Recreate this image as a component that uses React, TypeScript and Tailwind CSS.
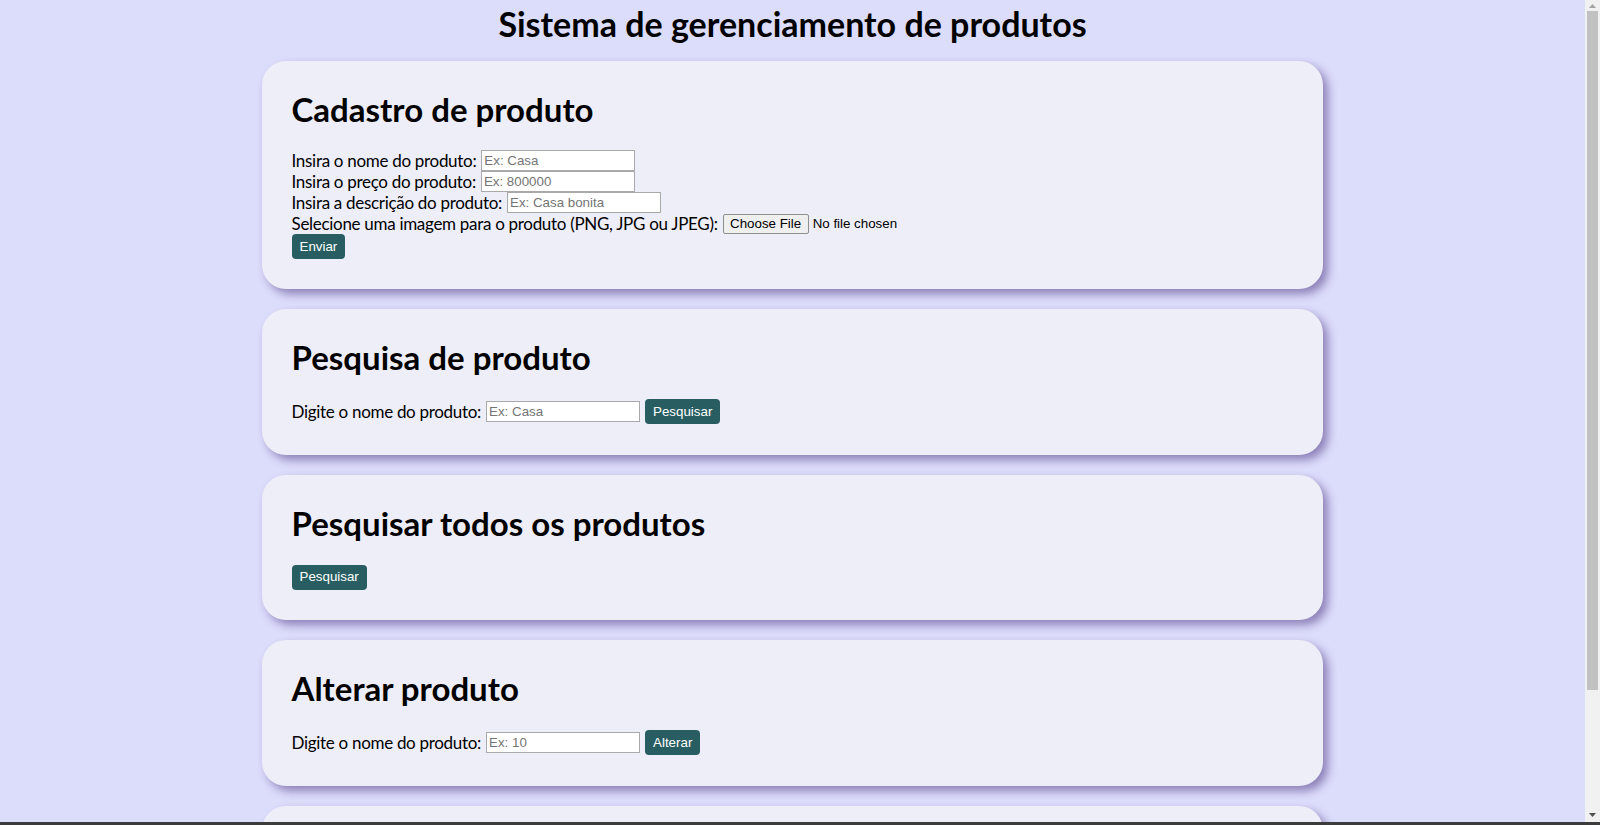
import React from "react";

const inputCls =
  "w-[154px] h-[21px] border border-[#a9a9a9] bg-white px-[2px] text-[13.33px] font-['Liberation_Sans',Arial,sans-serif] text-black placeholder:text-[#757575] outline-none";
const btnCls =
  "h-[25px] px-[8px] rounded-[4px] bg-[#285e62] text-white text-[13.33px] font-['Liberation_Sans',Arial,sans-serif] leading-none";

const cardCls =
  "rounded-[24px] bg-[#eeeef8] px-[30px] py-[30px] shadow-[5px_5px_10px_#8d80b8]";

function Card({ title, children }: { title: string; children: React.ReactNode }) {
  return (
    <section className={cardCls}>
      <h2 className="text-[33px] leading-[37px] font-bold text-black mb-[22px]">{title}</h2>
      {children}
    </section>
  );
}

function Label({ children }: { children: React.ReactNode }) {
  return (
    <span className="text-[17px] tracking-[-0.3px] leading-[21px] text-black whitespace-nowrap">
      {children}
    </span>
  );
}

export default function App() {
  return (
    <div className="min-h-screen bg-[#dcdcfb] font-['Lato','Open_Sans',sans-serif] text-black">
      <div className="w-[calc(100%-15px)]">
        <h1 className="text-center text-[34px] leading-[37px] font-bold pt-[5px] mb-[19px]">
          Sistema de gerenciamento de produtos
        </h1>
        <div className="mx-auto w-[67%] flex flex-col gap-5 pb-[12px]">
          <Card title="Cadastro de produto">
            <div className="flex flex-col">
              <div className="flex items-center h-[21px] gap-[5px]">
                <Label>Insira o nome do produto:</Label>
                <input className={inputCls} placeholder="Ex: Casa" />
              </div>
              <div className="flex items-center h-[21px] gap-[5px]">
                <Label>Insira o preço do produto:</Label>
                <input className={inputCls} placeholder="Ex: 800000" />
              </div>
              <div className="flex items-center h-[21px] gap-[5px]">
                <Label>Insira a descrição do produto:</Label>
                <input className={inputCls} placeholder="Ex: Casa bonita" />
              </div>
              <div className="flex items-center h-[21px] gap-[5px]">
                <Label>Selecione uma imagem para o produto (PNG, JPG ou JPEG):</Label>
                <div className="flex items-center gap-[4px] font-['Liberation_Sans',Arial,sans-serif] text-[13.33px]">
                  <button className="h-[20px] w-[86px] border border-[#8f8f8f] rounded-[2px] bg-[#efefef] text-black leading-none">
                    Choose File
                  </button>
                  <span className="text-black">No file chosen</span>
                </div>
              </div>
              <div className="flex">
                <button className={btnCls}>Enviar</button>
              </div>
            </div>
          </Card>

          <Card title="Pesquisa de produto">
            <div className="flex items-center h-[27px] gap-[5px]">
              <Label>Digite o nome do produto:</Label>
              <input className={inputCls} placeholder="Ex: Casa" />
              <button className={btnCls}>Pesquisar</button>
            </div>
          </Card>

          <Card title="Pesquisar todos os produtos">
            <div className="flex items-center h-[26px]">
              <button className={btnCls}>Pesquisar</button>
            </div>
          </Card>

          <Card title="Alterar produto">
            <div className="flex items-center h-[27px] gap-[5px]">
              <Label>Digite o nome do produto:</Label>
              <input className={inputCls} placeholder="Ex: 10" />
              <button className={btnCls}>Alterar</button>
            </div>
          </Card>

          {/* next card, only its top edge is in view */}
          <section className={`${cardCls} h-[146px]`} />
        </div>
      </div>

      {/* vertical scrollbar */}
      <div className="fixed top-0 right-0 bottom-0 w-[15px] bg-[#f1f1f1] flex flex-col items-center">
        <svg width="15" height="11" viewBox="0 0 15 11" className="shrink-0">
          <polygon points="4,8 11,8 7.5,4" fill="#a3a3a3" />
        </svg>
        <div className="w-[11px] h-[679px] bg-[#c1c1c1] shrink-0" />
        <div className="flex-1" />
        <svg width="15" height="14" viewBox="0 0 15 14" className="shrink-0">
          <polygon points="4,2 11,2 7.5,6" fill="#505050" />
        </svg>
      </div>
      <div className="fixed bottom-0 left-0 right-0 h-[3px] bg-[#3c3c3c]" />
    </div>
  );
}
